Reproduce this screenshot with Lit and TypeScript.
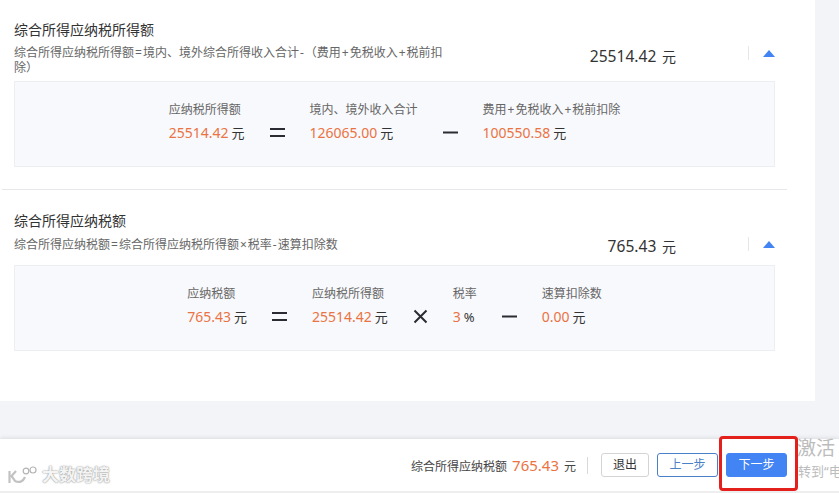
import { LitElement, html, css } from "lit";
import { customElement } from "lit/decorators.js";

type Term = { op?: string; label?: string; value?: string; unit?: string };

@customElement("app-root")
export class AppRoot extends LitElement {
  static styles = css`
    :host {
      display: block;
      position: relative;
      width: 839px;
      height: 493px;
      overflow: hidden;
      background: #f3f4f8;
      font-family: "Noto Sans", "Noto Sans CJK SC", sans-serif;
      color: #333;
    }
    .page { display: flex; flex-direction: column; height: 493px; }
    .main { flex: 1; }
    .card { width: 815px; height: 401px; background: #fff; }
    .section { width: 761px; margin-left: 2px; padding: 21px 12px 22px; }
    .section.first { border-bottom: 1px solid #e6e7eb; }
    .section.second { padding-top: 22px; }
    .head { display: flex; height: 46px; }
    .first .head { height: 53px; }
    .intro { width: 432px; }
    .title { font-size: 14px; line-height: 18px; color: #333; }
    .desc { font-size: 12px; line-height: 15px; color: #666; margin-top: 6px; }
    .second .desc { margin-top: 7px; }
    .sym { padding: 0 1px; }
    .total {
      width: 230px;
      text-align: right;
      font-size: 15.6px;
      line-height: 22px;
      margin-top: 24px;
      color: #333;
      white-space: nowrap;
    }
    .second .total { margin-top: 23px; }
    .total small { font-size: 14px; margin-left: 2px; }
    .toggle {
      margin-left: 72px;
      margin-top: 25px;
      height: 14px;
      border-left: 1px solid #e6e7eb;
      padding-left: 14px;
      display: flex;
      align-items: center;
    }
    .toggle svg { display: block; width: 12px; height: 7px; }
    .box {
      box-sizing: border-box;
      height: 86px;
      margin-top: 7px;
      background: #f8f9fc;
      border: 1px solid #eceef2;
      display: flex;
      justify-content: center;
      gap: 25px;
      padding-top: 19px;
    }
    .item { display: flex; flex-direction: column; }
    .label { font-size: 12px; line-height: 18px; color: #666; white-space: nowrap; }
    .val { font-size: 14px; line-height: 20px; margin-top: 4px; color: #ea7343; white-space: nowrap; }
    .val small { font-size: 13px; color: #333; margin-left: 3px; }
    .op { width: 15px; height: 15px; margin-top: 24px; display: block; }

    .footer {
      position: relative;
      box-sizing: border-box;
      height: 54px;
      background: #fff;
      border-bottom: 2px solid #eeeeee;
      box-shadow: 0 -1px 4px rgba(0, 0, 0, 0.1);
      display: flex;
      justify-content: flex-end;
      align-items: center;
      padding: 0 52px 0 0;
    }
    .sum { font-size: 12px; color: #444; white-space: nowrap; }
    .sum b { font-weight: 400; font-size: 15px; color: #ea7343; margin: 0 5px; }
    .sep { width: 1px; height: 17px; background: #d9d9d9; margin: 0 13px 0 11px; }
    button {
      box-sizing: border-box;
      height: 24px;
      padding: 0;
      font: inherit;
      font-size: 12px;
      line-height: 20px;
      border-radius: 3px;
      background: #fff;
    }
    .exit { width: 48px; border: 1px solid #d4d4d4; color: #333; margin-right: 8px; }
    .prev { width: 61px; border: 1px solid #4a80c8; color: #4a80c8; margin-right: 8px; }
    .next { width: 61px; border: 1px solid #4284f3; background: #4284f3; color: #fff; }

    .mark-red {
      position: absolute;
      box-sizing: border-box;
      left: 719px;
      top: 436px;
      width: 79px;
      height: 55px;
      border: 3px solid #e4201c;
      border-radius: 4px;
    }
    .win1, .win2 { position: absolute; color: #bcbcbc; white-space: nowrap; }
    .win1 { left: 797px; top: 436px; font-size: 19px; line-height: 24px; }
    .win2 { left: 798px; top: 463px; font-size: 13px; line-height: 16px; }
    .wm { position: absolute; left: 8px; top: 465px; display: flex; align-items: center; gap: 3px; }
    .wm svg { display: block; width: 31px; height: 20px; }
    .wm span {
      font-size: 17px;
      line-height: 20px;
      font-weight: 700;
      color: #f4f4f4;
      text-shadow: 0 0 2px #9a9a9a, 0 0 1px #a8a8a8;
    }
  `;

  private op(k: string) {
    const p: Record<string, string> = {
      "=": "M0 4H15M0 11H15",
      "-": "M0 7.5H15",
      x: "M1.5 1.5L13.5 13.5M13.5 1.5L1.5 13.5",
    };
    return html`<svg class="op" viewBox="0 0 15 15" fill="none" stroke="#2b2b33" stroke-width="2"><path d=${p[k]}></path></svg>`;
  }

  private spaced(text: string) {
    return text
      .split(/([=+\-×])/)
      .map((part, i) => (i % 2 ? html`<span class="sym">${part}</span>` : part));
  }

  private section(cls: string, title: string, desc: string, total: string, terms: Term[]) {
    return html`
      <section class="section ${cls}">
        <div class="head">
          <div class="intro">
            <div class="title">${title}</div>
            <div class="desc">${this.spaced(desc)}</div>
          </div>
          <div class="total">${total}<small> 元</small></div>
          <div class="toggle">
            <svg viewBox="0 0 12 7"><path d="M6 0L12 7H0Z" fill="#4284f3"></path></svg>
          </div>
        </div>
        <div class="box">
          ${terms.map((t) =>
            t.op
              ? this.op(t.op)
              : html`<div class="item">
                  <div class="label">${this.spaced(t.label ?? "")}</div>
                  <div class="val">${t.value}<small>${t.unit}</small></div>
                </div>`,
          )}
        </div>
      </section>
    `;
  }

  render() {
    return html`
      <div class="page">
        <div class="main">
          <div class="card">
            ${this.section(
              "first",
              "综合所得应纳税所得额",
              "综合所得应纳税所得额=境内、境外综合所得收入合计-（费用+免税收入+税前扣除）",
              "25514.42",
              [
                { label: "应纳税所得额", value: "25514.42", unit: "元" },
                { op: "=" },
                { label: "境内、境外收入合计", value: "126065.00", unit: "元" },
                { op: "-" },
                { label: "费用+免税收入+税前扣除", value: "100550.58", unit: "元" },
              ],
            )}
            ${this.section(
              "second",
              "综合所得应纳税额",
              "综合所得应纳税额=综合所得应纳税所得额×税率-速算扣除数",
              "765.43",
              [
                { label: "应纳税额", value: "765.43", unit: "元" },
                { op: "=" },
                { label: "应纳税所得额", value: "25514.42", unit: "元" },
                { op: "x" },
                { label: "税率", value: "3", unit: "%" },
                { op: "-" },
                { label: "速算扣除数", value: "0.00", unit: "元" },
              ],
            )}
          </div>
        </div>
        <footer class="footer">
          <div class="sum">综合所得应纳税额<b>765.43</b>元</div>
          <div class="sep"></div>
          <button class="exit">退出</button>
          <button class="prev">上一步</button>
          <button class="next">下一步</button>
        </footer>
      </div>
      <div class="win1">激活</div>
      <div class="win2">转到“电</div>
      <div class="mark-red"></div>
      <div class="wm">
        <svg viewBox="0 0 31 20" fill="none">
          <path d="M1.5 6V18M8 6L3.5 11L7 16C11 18 15 17 17 12" stroke="#c2c2c2" stroke-width="2.2"></path>
          <circle cx="18" cy="6" r="2.8" stroke="#b4b4b4" stroke-width="1.2"></circle>
          <circle cx="25" cy="5" r="3" stroke="#b4b4b4" stroke-width="1.2"></circle>
        </svg>
        <span>大数跨境</span>
      </div>
    `;
  }
}
